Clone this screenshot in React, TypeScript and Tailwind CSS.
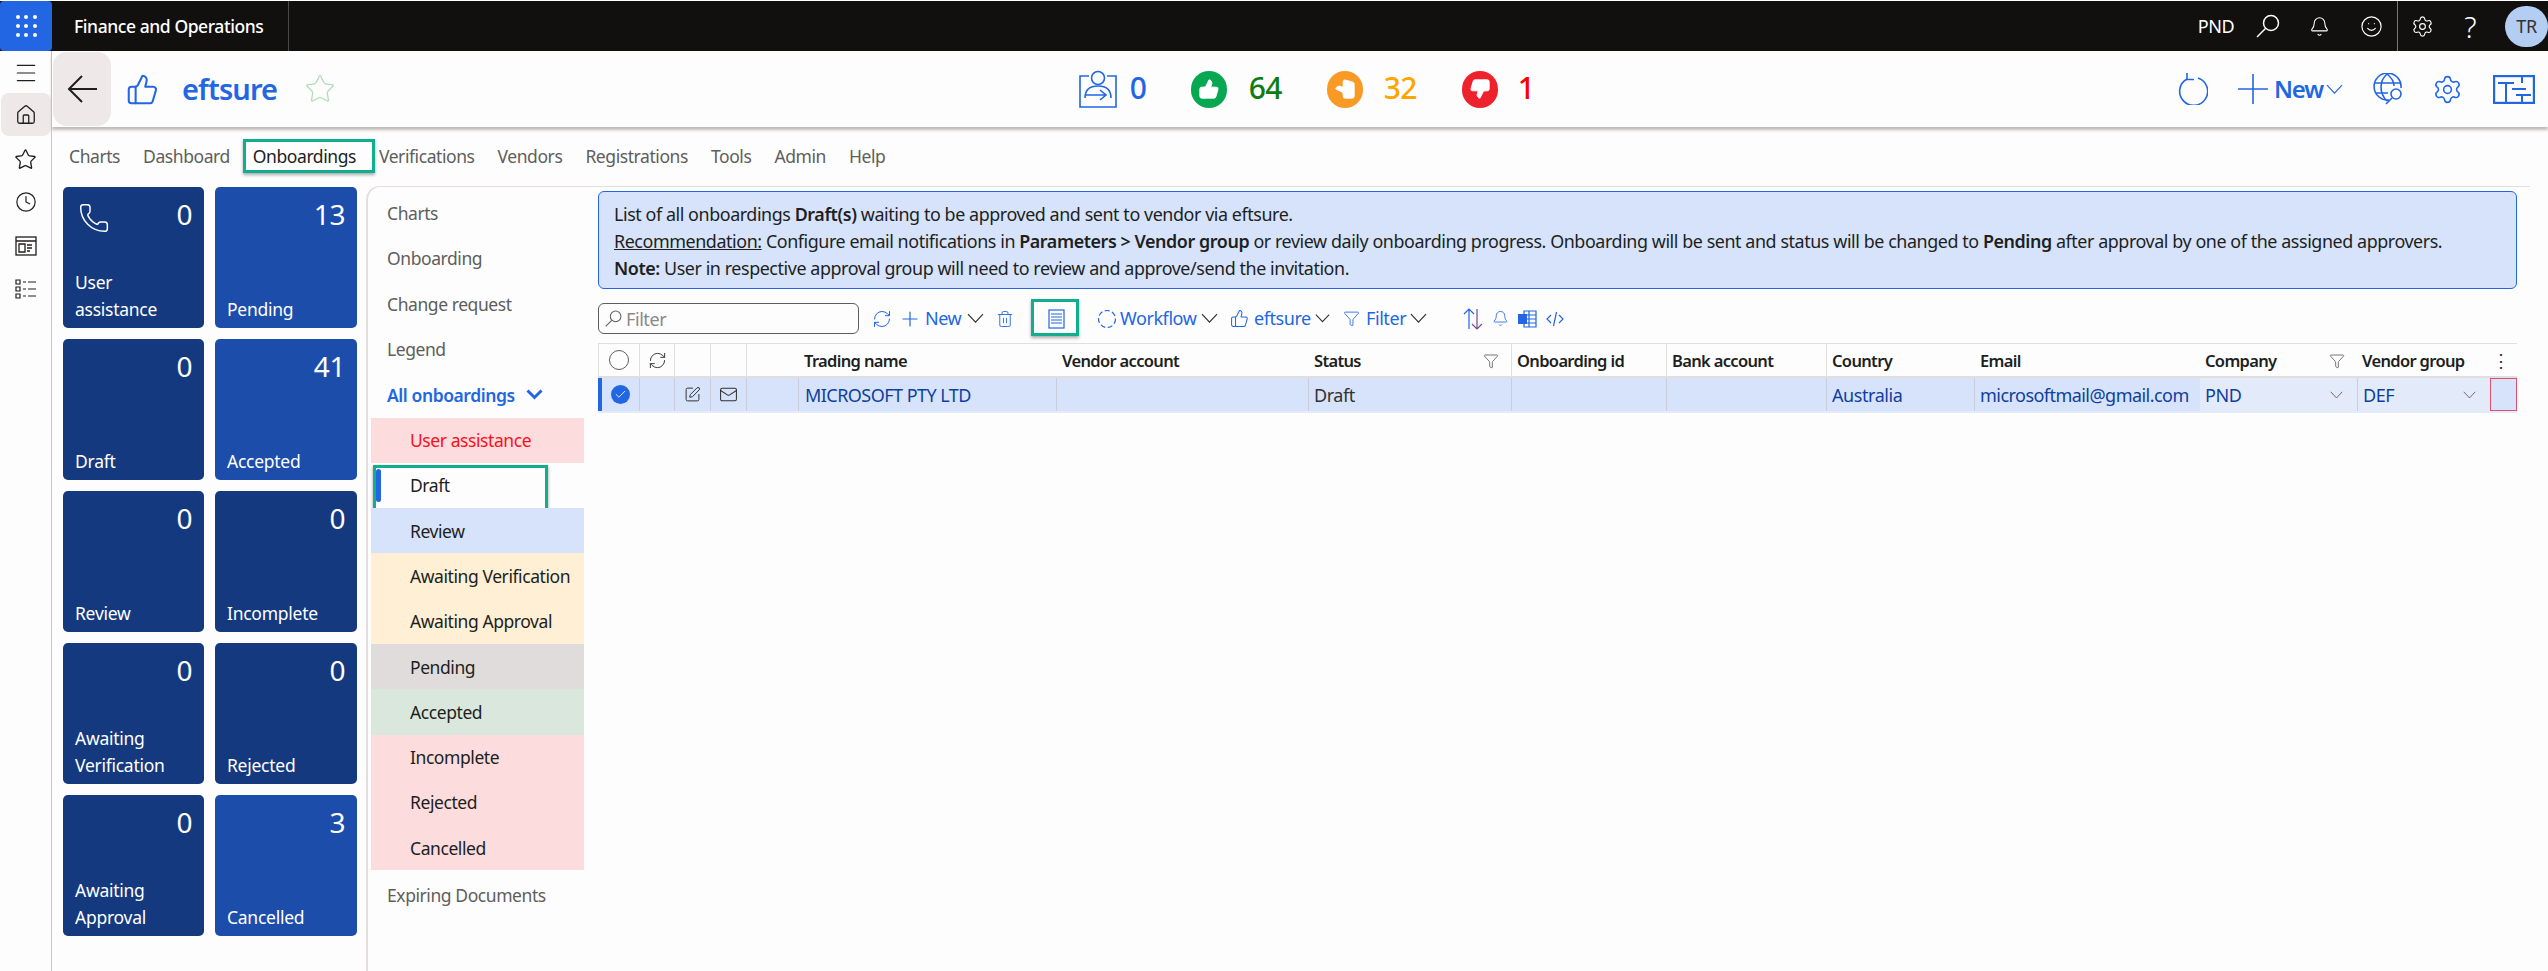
import {
  Bell,
  Check,
  Clock,
  Funnel,
  House,
  Mail,
  Menu,
  Phone,
  Plus,
  RefreshCw,
  Settings,
  Smile,
  SquarePen,
  Star,
  ThumbsDown,
  ThumbsUp,
  Trash2,
} from "lucide-react";

const BLUE = "#2266e3";

const tabs = ["Charts", "Dashboard", "Onboardings", "Verifications", "Vendors", "Registrations", "Tools", "Admin", "Help"];

const tiles = [
  { label: "User assistance", count: 0, dark: true, phone: true },
  { label: "Pending", count: 13, dark: false },
  { label: "Draft", count: 0, dark: true },
  { label: "Accepted", count: 41, dark: false },
  { label: "Review", count: 0, dark: true },
  { label: "Incomplete", count: 0, dark: true },
  { label: "Awaiting Verification", count: 0, dark: true },
  { label: "Rejected", count: 0, dark: true },
  { label: "Awaiting Approval", count: 0, dark: true },
  { label: "Cancelled", count: 3, dark: false },
];

const navRows = [
  { label: "User assistance", bg: "bg-[#fcdcdc]", text: "text-[#f8101c]" },
  { label: "Draft", bg: "bg-[#fdfdfd]", text: "text-[#201f1e]" },
  { label: "Review", bg: "bg-[#d7e3fb]", text: "text-[#201f1e]" },
  { label: "Awaiting Verification", bg: "bg-[#ffefd4]", text: "text-[#201f1e]" },
  { label: "Awaiting Approval", bg: "bg-[#ffefd4]", text: "text-[#201f1e]" },
  { label: "Pending", bg: "bg-[#e0dcdb]", text: "text-[#201f1e]" },
  { label: "Accepted", bg: "bg-[#dae7dd]", text: "text-[#201f1e]" },
  { label: "Incomplete", bg: "bg-[#fcdcdc]", text: "text-[#201f1e]" },
  { label: "Rejected", bg: "bg-[#fcdcdc]", text: "text-[#201f1e]" },
  { label: "Cancelled", bg: "bg-[#fcdcdc]", text: "text-[#201f1e]" },
];

const tableCols =
  "grid grid-cols-[42px_35px_36px_36px_52px_258px_252px_203px_155px_160px_148px_225px_157px_133px_27px]";

const Chev = ({ className, w = 17 }: { className?: string; w?: number }) => (
  <svg width={w} height={w * 0.6} viewBox="0 0 17 10" fill="none" stroke="currentColor" strokeWidth="1.2" className={className}>
    <path d="m1 1 7.500 8L16 1" />
  </svg>
);

const Magnifier = ({ size, className }: { size: number; className?: string }) => (
  <svg width={size} height={size} viewBox="0 0 24 24" fill="none" stroke="currentColor" strokeWidth="1.5" className={className}>
    <circle cx="15" cy="9" r="7.500" />
    <path d="M9.500 14.500 1 23" />
  </svg>
);

const HeaderCount = ({ value, color }: { value: number; color: string }) => (
  <span className={`text-[30px] leading-none font-medium ${color}`}>{value}</span>
);

const Tile = ({ label, count, dark, phone }: { label: string; count: number; dark: boolean; phone?: boolean }) => (
  <div className={`h-[141px] rounded-[5px] px-3 pt-[7px] pb-[5px] flex flex-col justify-between text-white ${dark ? "bg-[#14397f]" : "bg-[#1c4dab]"}`}>
    <div className="flex justify-between items-start">
      {phone ? <Phone size={32} strokeWidth={1.1} className="mt-[8px] ml-[3px]" /> : <span />}
      <span className="text-[28px] leading-[40px]">{count}</span>
    </div>
    <div className="text-[17.5px] leading-[27px] tracking-[-0.015em] w-[110px]">{label}</div>
  </div>
);

const TableHead = ({ label, funnel }: { label?: string; funnel?: boolean }) => (
  <div className="h-full w-full flex items-center justify-between pl-[5px] pr-[12px] pt-[2px] font-semibold text-[16.5px] tracking-[-0.04em] text-[#201f1e] whitespace-nowrap">
    <span>{label}</span>
    {funnel && <Funnel size={16} strokeWidth={1.1} className="text-[#444]" />}
  </div>
);

const App = () => {
  return (
    <div className="w-[2548px] h-[971px] overflow-hidden bg-[#fdfdfd] pt-px font-['Noto_Sans',sans-serif] text-[17px] tracking-[-0.025em]">
      {/* top bar */}
      <div className="h-[50px] bg-[#11100f] flex items-center text-white">
        <div className="w-[52px] h-full bg-[#2266e3] rounded-[4px] grid grid-cols-3 gap-[5px] content-center justify-center px-[16px]">
          {Array.from({ length: 9 }).map((_, i) => (
            <span key={i} className="w-[4px] h-[4px] bg-white rounded-full" />
          ))}
        </div>
        <div className="w-[237px] h-full pl-[22px] border-r border-[#4a4a4a] flex items-center text-[17.5px] font-medium whitespace-nowrap">
          Finance and Operations
        </div>
        <div className="ml-auto flex items-center h-full">
          <span className="text-[18px]">PND</span>
          <Magnifier size={24} className="ml-[22px]" />
          <Bell size={21} strokeWidth={1.2} className="ml-[29px]" />
          <Smile size={23} strokeWidth={1.2} className="ml-[30px]" />
          <div className="ml-[14px] h-full border-l border-[#777]" />
          <Settings size={23} strokeWidth={1.2} className="ml-[13px]" />
          <span className="ml-[30px] text-[29px] font-light leading-none">?</span>
          <div className="ml-[29px] w-[43px] h-[41px] rounded-full bg-[#b4cdf2] text-[#323130] flex items-center justify-center text-[18px]">
            TR
          </div>
        </div>
      </div>

      <div className="flex h-[920px]">
        {/* left rail */}
        <div className="w-[52px] shrink-0 border-r border-[#c9c5c3] flex flex-col items-center text-[#201f1e]">
          <Menu size={26} strokeWidth={1.1} className="mt-[9px]" />
          <div className="mt-[7px] w-[50px] h-[43px] bg-[#efe8e8] rounded-[8px] flex items-center justify-center">
            <House size={22} strokeWidth={1.4} />
          </div>
          <Star size={23} strokeWidth={1.4} className="mt-[12px]" />
          <Clock size={22} strokeWidth={1.3} className="mt-[20px]" />
          <svg width="22" height="20" viewBox="0 0 22 20" fill="none" stroke="currentColor" strokeWidth="1.3" className="mt-[23px]">
            <rect x="1" y="1" width="20" height="18" />
            <path d="M1 5h20M4 8h6v8H4zM12 9h5M12 12h5M12 15h3" />
          </svg>
          <svg width="22" height="20" viewBox="0 0 22 20" fill="none" stroke="currentColor" strokeWidth="1.2" className="mt-[23px]">
            <path d="M1 1h4v4H1zM1 8h4v4H1zM1 15h4v4H1zM8 3h3M13 3h8M8 10h3M13 10h8M8 17h3M13 17h8" />
          </svg>
        </div>

        <div className="flex-1 min-w-0 flex flex-col">
          {/* page header */}
          <div className="h-[76px] flex items-center shadow-[0_3px_3px_#bdb9b7] pr-[13px] relative">
            <div className="flex-1 flex items-center">
              <div className="ml-px w-[58px] h-[74px] bg-[#efe8e8] rounded-[14px] flex items-center justify-center">
                <svg width="30" height="28" viewBox="0 0 30 28" fill="none" stroke="#201f1e" strokeWidth="2">
                  <path d="M30 14H2M15 1 2 14l13 13" />
                </svg>
              </div>
              <ThumbsUp size={33} strokeWidth={1.5} color={BLUE} className="ml-[15px]" />
              <span className="ml-[23px] w-[92px] pb-[2px] text-[29px] leading-none font-semibold text-[#2266e3] tracking-[-0.03em]">eftsure</span>
              <Star size={32} strokeWidth={1} className="ml-[30px] text-[#b4dcb8]" />
            </div>
            <div className="flex items-center ml-[26px]">
              <svg width="38" height="38" viewBox="0 0 38 38" fill="none" stroke={BLUE} strokeWidth="1.6">
                <path d="M10 6H1v31h36V6h-9" />
                <circle cx="19" cy="8" r="6.500" />
                <path d="M6 28c0-8 5-12 13-12s13 4 13 12M6 25h20M21 20l6 5-6 5" />
              </svg>
              <span className="ml-[13px] w-[61px]"><HeaderCount value={0} color="text-[#2266e3]" /></span>
              <div className="w-[36px] h-[37px] rounded-full bg-[#07a851] flex items-center justify-center">
                <ThumbsUp size={22} fill="white" color="white" strokeWidth={1} />
              </div>
              <span className="ml-[22px] w-[78px]"><HeaderCount value={64} color="text-[#107c10]" /></span>
              <div className="w-[36px] h-[37px] rounded-full bg-[#f99a26] flex items-center justify-center">
                <ThumbsUp size={22} fill="white" color="white" strokeWidth={1} className="-rotate-90" />
              </div>
              <span className="ml-[21px] w-[78px]"><HeaderCount value={32} color="text-[#ffa500]" /></span>
              <div className="w-[36px] h-[37px] rounded-full bg-[#ee222c] flex items-center justify-center">
                <ThumbsDown size={22} fill="white" color="white" strokeWidth={1} />
              </div>
              <span className="ml-[20px]"><HeaderCount value={1} color="text-[#ff0000]" /></span>
            </div>
            <div className="flex-1 flex items-center justify-end text-[#2266e3]">
              <svg width="30" height="32" viewBox="0 0 30 32" fill="none" stroke={BLUE} strokeWidth="1.6">
                <path d="M20 5A14 14 0 1 1 9 6" />
                <path d="M9 0v6.500h7" />
              </svg>
              <svg width="30" height="30" viewBox="0 0 30 30" stroke={BLUE} strokeWidth="1.6" className="ml-[30px]">
                <path d="M15 0v30M0 15h30" />
              </svg>
              <span className="ml-[6px] w-[46px] text-[24px] leading-none font-semibold tracking-[-0.05em]">New</span>
              <Chev className="ml-[6px]" />
              <svg width="30" height="32" viewBox="0 0 30 32" fill="none" stroke={BLUE} strokeWidth="1.6" className="ml-[30px]">
                <path d="M16 27A13.500 13.500 0 1 1 28 15M2 10h25M2 20h13M14 1C6 8 6 20 14 28M14 1c5 4 7 9 7 12" />
                <circle cx="23" cy="21" r="5" />
                <path d="m19 25-6 6" />
              </svg>
              <Settings size={31} strokeWidth={1.2} className="ml-[29px]" />
              <svg width="42" height="29" viewBox="0 0 42 29" fill="none" stroke={BLUE} strokeWidth="2" className="ml-[30px]">
                <rect x="1" y="1" width="40" height="27" strokeWidth="2.400" />
                <path d="M5 8h16M13 8v20M19 14h14M23 20h15M29 20v8M29 1v7" />
              </svg>
            </div>
          </div>

          {/* tabs */}
          <div className="h-[59px] shrink-0 flex items-center gap-[23px] pl-[17px] pb-[1px] text-[17.5px] text-[#605e5c]">
            {tabs.map((tab) => (
              <div key={tab} className={`relative whitespace-nowrap ${tab === "Onboardings" ? "text-[#201f1e]" : ""}`}>
                {tab}
                {tab === "Onboardings" && (
                  <span className="absolute -left-[10px] -right-[19px] -top-[4px] h-[34px] border-[3px] border-[#10ad8e] shadow-[0_2px_3px_#aaa]" />
                )}
              </div>
            ))}
          </div>

          {/* body */}
          <div className="flex flex-1 min-h-0">
            <div className="ml-[11px] mt-px grid grid-cols-[141px_142px] auto-rows-[141px] gap-[11px] shrink-0 text-left">
              {tiles.map((t) => (
                <Tile key={t.label} {...t} />
              ))}
            </div>

            <div className="ml-[9px] mr-[18px] flex-1 min-w-0 flex border-l-2 border-t border-[#e3dedd] rounded-tl-[14px]">
              {/* side nav */}
              <div className="w-[230px] shrink-0 pt-[3px] text-[17.5px] text-[#605e5c]">
                {["Charts", "Onboarding", "Change request", "Legend"].map((item) => (
                  <div key={item} className="h-[45.500px] pl-[19px] flex items-center">{item}</div>
                ))}
                <div className="h-[45.500px] pl-[19px] flex items-center gap-[11px] font-semibold text-[#2266e3]">
                  All onboardings
                  <svg width="17" height="11" viewBox="0 0 17 11" fill="none" stroke={BLUE} strokeWidth="3">
                    <path d="m1.500 1.500 7 7 7-7" />
                  </svg>
                </div>
                <div className="ml-[3px] w-[213px]">
                  {navRows.map((row) => (
                    <div key={row.label} className={`relative h-[45.300px] pl-[39px] flex items-center whitespace-nowrap ${row.bg} ${row.text}`}>
                      {row.label}
                      {row.label === "Draft" && (
                        <>
                          <span className="absolute left-[5px] top-[6px] w-[5px] h-[33px] rounded-[3px] bg-[#2266e3]" />
                          <span className="absolute left-[2px] top-[2px] w-[175px] h-[48px] border-[3px] border-[#10ad8e] shadow-[0_2px_3px_#999]" />
                        </>
                      )}
                    </div>
                  ))}
                </div>
                <div className="h-[50px] pl-[19px] flex items-center">Expiring Documents</div>
              </div>

              {/* content */}
              <div className="w-[1919px] shrink-0 pt-[4px]">
                <div className="h-[98px] rounded-[6px] border border-[#2266e3] bg-[#d7e3fb] pl-[15px] pt-[9px] text-[17.900px] text-[#201f1e] leading-[27px] whitespace-nowrap">
                  <div>List of all onboardings <b className="font-semibold">Draft(s)</b> waiting to be approved and sent to vendor via eftsure.</div>
                  <div>
                    <span className="underline">Recommendation:</span> Configure email notifications in <b className="font-semibold">Parameters &gt; Vendor group</b> or review daily onboarding progress. Onboarding will be sent and status will be changed to <b className="font-semibold">Pending</b> after approval by one of the assigned approvers.
                  </div>
                  <div><b className="font-semibold">Note:</b> User in respective approval group will need to review and approve/send the invitation.</div>
                </div>

                {/* toolbar */}
                <div className="h-[54px] flex items-start pt-[14px] text-[#2266e3] text-[18px]">
                  <div className="w-[261px] h-[31px] rounded-[6px] border border-[#605e5c] flex items-center pl-[6px] text-[#8a8886]">
                    <Magnifier size={17} className="text-[#605e5c]" />
                    <span className="ml-[4px] pt-[2px]">Filter</span>
                  </div>
                  <div className="h-[31px] flex items-center">
                    <RefreshCw size={20} strokeWidth={1.2} className="ml-[13px]" />
                    <Plus size={24} strokeWidth={1.2} className="ml-[6px]" />
                    <span className="ml-[3px] w-[38px]">New</span>
                    <Chev className="ml-[4px] text-[#323130]" />
                    <Trash2 size={18} strokeWidth={1.2} className="ml-[12px]" />
                    <div className="relative ml-[34px] w-[17px] h-[20px]">
                      <svg width="17" height="20" viewBox="0 0 17 20" fill="none" stroke={BLUE} strokeWidth="1.2">
                        <rect x="1" y="1" width="15" height="18" />
                        <path d="M3 5h11M3 8h11M3 11h11M3 14h11" />
                      </svg>
                      <span className="absolute -left-[17px] -top-[10px] w-[48px] h-[37px] border-[3px] border-[#10ad8e] shadow-[0_2px_3px_#aaa]" />
                    </div>
                    <svg width="20" height="20" viewBox="0 0 20 20" fill="none" stroke={BLUE} strokeWidth="1.2" strokeDasharray="5 2.500" className="ml-[32px]">
                      <circle cx="10" cy="10" r="8.500" />
                    </svg>
                    <span className="ml-[3px] w-[78px]">Workflow</span>
                    <Chev className="ml-[3px] text-[#323130]" />
                    <ThumbsUp size={19} strokeWidth={1.3} className="ml-[12px]" />
                    <span className="ml-[5px] w-[58px]">eftsure</span>
                    <Chev className="ml-[3px] w-[15px] text-[#323130]" />
                    <Funnel size={17} strokeWidth={1.2} className="ml-[13px]" />
                    <span className="ml-[6px] w-[42px]">Filter</span>
                    <Chev className="ml-[2px] text-[#323130]" />
                    <svg width="20" height="22" viewBox="0 0 20 22" fill="none" stroke={BLUE} strokeWidth="1.2" className="ml-[36px]">
                      <path d="M6 21V1M1 6l5-5 5 5" />
                      <path d="M14 1v20M9 16l5 5 5-5" stroke="#7a4a8c" />
                    </svg>
                    <Bell size={17} strokeWidth={1.2} className="ml-[9px]" />
                    <svg width="20" height="20" viewBox="0 0 20 20" fill="none" stroke={BLUE} strokeWidth="1.2" className="ml-[8px]">
                      <path d="M7 2h12v16H7zM7 6h12M7 10h12M7 14h12M12 2v16" />
                      <rect x="1" y="5" width="9" height="10" fill={BLUE} stroke="none" />
                    </svg>
                    <svg width="18" height="18" viewBox="0 0 18 18" fill="none" stroke={BLUE} strokeWidth="1.2" className="ml-[9px]">
                      <path d="M5 5 1 9l4 4M13 5l4 4-4 4M10.500 2 7.500 16" />
                    </svg>
                  </div>
                </div>

                {/* grid */}
                <div className={`${tableCols} h-[35px] border-t border-b-2 border-[#e1dfdd] bg-[#fdfdfd]`}>
                  <div className="flex items-center justify-center border-l border-r border-[#e1dfdd]">
                    <span className="w-[20px] h-[20px] rounded-full border border-[#605e5c]" />
                  </div>
                  <div className="flex items-center justify-center border-r border-[#e1dfdd]">
                    <RefreshCw size={19} strokeWidth={1.2} className="text-[#323130]" />
                  </div>
                  <div className="border-r border-[#e1dfdd]" />
                  <div className="border-r border-[#e1dfdd]" />
                  <div />
                  <TableHead label="Trading name" />
                  <TableHead label="Vendor account" />
                  <div className="border-r border-[#e1dfdd]"><TableHead label="Status" funnel /></div>
                  <div className="border-r border-[#e1dfdd]"><TableHead label="Onboarding id" /></div>
                  <div className="border-r border-[#e1dfdd]"><TableHead label="Bank account" /></div>
                  <TableHead label="Country" />
                  <TableHead label="Email" />
                  <TableHead label="Company" funnel />
                  <TableHead label="Vendor group" />
                  <div className="flex items-center justify-center pr-[6px] text-[18px] leading-none text-[#323130]">⋮</div>
                </div>
                <div className={`${tableCols} h-[35px] bg-[#d7e3fb] border-b-2 border-[#e3ebfa] text-[18px] text-[#0f3f9e]`}>
                  <div className="flex items-center justify-center border-l-4 border-[#2266e3] border-r border-r-[#c9cfda]">
                    <span className="w-[19px] h-[19px] rounded-full bg-[#2266e3] flex items-center justify-center">
                      <Check size={13} color="white" strokeWidth={1.6} />
                    </span>
                  </div>
                  <div className="border-r border-[#c9cfda]" />
                  <div className="flex items-center justify-center border-r border-[#c9cfda]">
                    <SquarePen size={17} strokeWidth={1.4} className="text-[#323130]" />
                  </div>
                  <div className="flex items-center justify-center border-r border-[#c9cfda]">
                    <Mail size={19} strokeWidth={1.3} className="text-[#323130]" />
                  </div>
                  <div className="border-r border-[#c9cfda]" />
                  <div className="border-r border-[#c9cfda] pl-[6px] pt-[1px] flex items-center whitespace-nowrap tracking-[-0.03em]">MICROSOFT PTY LTD</div>
                  <div className="border-r border-[#c9cfda]" />
                  <div className="border-r border-[#c9cfda] pl-[5px] pt-[1px] flex items-center text-[#323130]">Draft</div>
                  <div className="border-r border-[#c9cfda]" />
                  <div className="border-r border-[#c9cfda]" />
                  <div className="border-r border-[#c9cfda] pl-[5px] pt-[1px] flex items-center">Australia</div>
                  <div className="pl-[5px] pt-[1px] flex items-center whitespace-nowrap tracking-[-0.03em]">microsoftmail@gmail.com</div>
                  <div className="bg-[#e3ebfa] pl-[5px] pt-[1px] pr-[14px] flex items-center justify-between">
                    PND
                    <Chev w={13} className="text-[#605e5c]" />
                  </div>
                  <div className="bg-[#e3ebfa] border-l border-[#c9cfda] pl-[5px] pt-[1px] pr-[14px] flex items-center justify-between">
                    DEF
                    <Chev w={13} className="text-[#605e5c]" />
                  </div>
                  <div className="border border-[#e0506a] bg-[#d7e3fb]" />
                </div>
              </div>
            </div>
          </div>
        </div>
      </div>
    </div>
  );
};

export default App;
